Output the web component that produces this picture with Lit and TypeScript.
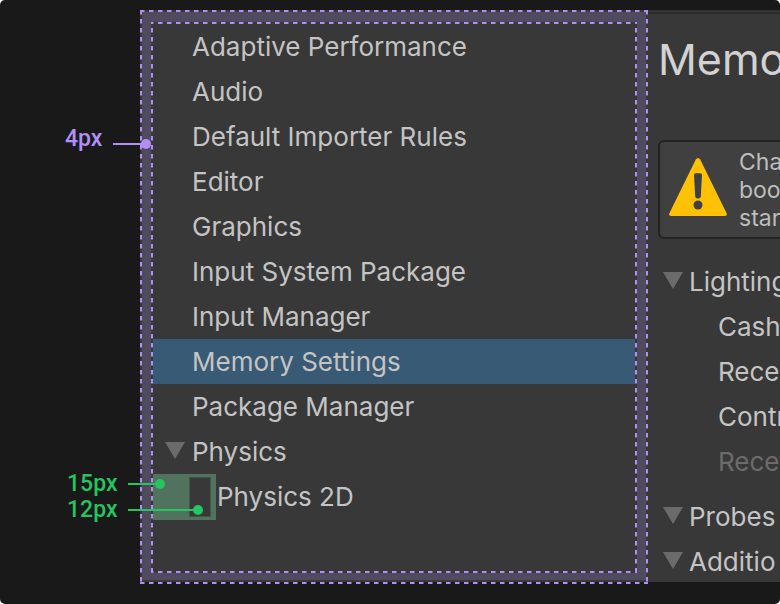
import { LitElement, html, css, nothing } from "lit";
import { customElement, property, state } from "lit/decorators.js";
import { classMap } from "lit/directives/class-map.js";

const arrow = html`<svg class="arrow" viewBox="0 0 20 17" aria-hidden="true">
  <path d="M0 0H20L10 17Z" fill="#6b6b6b" />
</svg>`;

const rowStyles = css`
  button {
    display: flex;
    align-items: center;
    width: 100%;
    height: 45px;
    margin: 0;
    padding: 0;
    border: 0;
    background: none;
    color: #c4c4c4;
    font: inherit;
    text-align: left;
    white-space: nowrap;
  }
  ul {
    list-style: none;
    margin: 0;
    padding: 0;
  }
  .arrow {
    flex: none;
    width: 20px;
    height: 17px;
    margin: 0 6px 2px 0;
  }
`;

interface Category {
  name: string;
  kind?: "group" | "child";
}

const CATEGORIES: Category[] = [
  { name: "Adaptive Performance" },
  { name: "Audio" },
  { name: "Default Importer Rules" },
  { name: "Editor" },
  { name: "Graphics" },
  { name: "Input System Package" },
  { name: "Input Manager" },
  { name: "Memory Settings" },
  { name: "Package Manager" },
  { name: "Physics", kind: "group" },
  { name: "Physics 2D", kind: "child" },
];

@customElement("category-list")
export class CategoryList extends LitElement {
  @state() selected = "Memory Settings";

  static styles = [
    rowStyles,
    css`
      :host {
        --dash: #b18ff5;
        --soft: #b18ff580;
        --across: repeating-linear-gradient(90deg, var(--dash) 0 4px, var(--soft) 4px 5px, transparent 5px 9px);
        --down: repeating-linear-gradient(180deg, var(--dash) 0 4px, var(--soft) 4px 5px, transparent 5px 9px);
        display: block;
        position: relative;
        min-width: 0;
        background: linear-gradient(#383838, #383838) 0 0 / 100% calc(100% - 2px) no-repeat;
      }
      .outer,
      .inner {
        background-image: var(--across), var(--across), var(--down), var(--down);
        background-size: 100% 2px, 100% 2px, 2px 100%, 2px 100%;
        background-repeat: no-repeat;
      }
      .outer {
        padding: 2px 2px 4px;
        background-position: 0 0, 0 100%, 0 0, 100% 0;
      }
      .band {
        border: solid #504a5e;
        border-width: 10px 9px 7px;
      }
      .inner {
        padding: 2px 2px 54px;
        background-position: -2px 0, -2px 100%, 0 -3px, 100% -3px;
        background-size: calc(100% + 2px) 2px, calc(100% + 2px) 2px, 2px calc(100% + 3px), 2px calc(100% + 3px);
      }
      button {
        padding-left: 39px;
      }
      .group {
        padding-left: 12px;
      }
      .group .arrow {
        margin-right: 7px;
      }
      .child {
        padding-left: 0;
        gap: 1px;
      }
      .selected {
        background: #385a75;
      }
      .indent {
        box-sizing: border-box;
        flex: none;
        width: 63px;
        height: 46px;
        border: solid #51735e;
        border-width: 3px 5px 3px 36px;
      }
      .slot {
        display: block;
        box-sizing: border-box;
        height: 100%;
        border: 1px solid #40564a;
      }
    `,
  ];

  render() {
    return html`<nav class="outer" aria-label="Project settings">
      <div class="band">
        <ul class="inner">
          ${CATEGORIES.map(
            (c) => html`<li>
              <button
                class=${classMap({
                  selected: c.name === this.selected,
                  group: c.kind === "group",
                  child: c.kind === "child",
                })}
                @click=${() => (this.selected = c.name)}
              >
                ${c.kind === "group" ? arrow : nothing}
                ${c.kind === "child" ? html`<span class="indent"><span class="slot"></span></span>` : nothing}
                <span>${c.name}</span>
              </button>
            </li>`,
          )}
        </ul>
      </div>
    </nav>`;
  }
}

@customElement("settings-pane")
export class SettingsPane extends LitElement {
  static styles = [
    rowStyles,
    css`
      :host {
        display: flex;
        flex-direction: column;
        overflow: hidden;
        box-sizing: border-box;
        height: calc(100% - 2px);
        min-height: 0;
        contain: size;
        padding-left: 10px;
        border-top: 1px solid #303030;
        background: linear-gradient(#2a2a2a, #2a2a2a) 0 1px / 100% 2px no-repeat #383838;
      }
      h1 {
        flex: none;
        margin: 22px 0 0;
        color: #d2d2d2;
        font-size: 43px;
        font-weight: 400;
        line-height: 52px;
        white-space: nowrap;
      }
      .notice {
        box-sizing: border-box;
        flex: none;
        display: flex;
        align-items: center;
        gap: 12px;
        width: 200px;
        height: 99px;
        margin-top: 55px;
        padding-left: 9px;
        border: 2px solid #232323;
        border-radius: 6px;
        background: #404040;
        color: #bdbdbd;
        font-size: 23px;
        line-height: 28px;
      }
      .notice svg {
        flex: none;
        width: 58px;
        height: 58px;
        margin-bottom: 6px;
      }
      p {
        margin: 0;
      }
      section {
        flex: none;
        padding-left: 5px;
      }
      .notice + section {
        padding-top: 20px;
        padding-bottom: 10px;
      }
      li {
        height: 45px;
        padding-left: 55px;
        line-height: 45px;
        white-space: nowrap;
      }
      .disabled {
        color: #6b6b6b;
      }
    `,
  ];

  render() {
    return html`
      <h1>Memo</h1>
      <div class="notice" role="note">
        <svg viewBox="0 0 58 58" aria-hidden="true">
          <path
            d="M26.8 1.6Q29-1.5 31.2 1.6L57.6 55.2Q58.4 57.6 56 58H2Q-.4 57.6.4 55.2Z"
            fill="#ffc107"
          />
          <path d="M25 17Q25 15.2 27 15.2H31Q33 15.2 33 17L31.8 38.6Q31.6 40.4 30 40.4H28Q26.4 40.4 26.2 38.6Z" fill="#404040" />
          <circle cx="29" cy="47" r="4.5" fill="#404040" />
        </svg>
        <p>Cha<br />boo<br />star</p>
      </div>
      <section>
        <button>${arrow}<span>Lighting</span></button>
        <ul>
          <li>Cash</li>
          <li>Rece</li>
          <li>Contr</li>
          <li class="disabled">Rece</li>
        </ul>
      </section>
      <section><button>${arrow}<span>Probes</span></button></section>
      <section><button>${arrow}<span>Additio</span></button></section>
    `;
  }
}

@customElement("size-callout")
export class SizeCallout extends LitElement {
  @property() label = "";

  static styles = css`
    :host {
      position: absolute;
      display: flex;
      align-items: center;
      gap: 11px;
      height: 26px;
      font: 500 23px/26px Roboto, sans-serif;
    }
    .line {
      position: relative;
      flex: 1;
      height: 2px;
      margin-top: var(--drop, 0);
      background: currentColor;
    }
    .line::after {
      content: "";
      position: absolute;
      right: -5px;
      top: -4px;
      width: 10px;
      height: 10px;
      border-radius: 50%;
      background: currentColor;
    }
  `;

  render() {
    return html`<span>${this.label}</span><span class="line"></span>`;
  }
}

@customElement("app-root")
export class AppRoot extends LitElement {
  static styles = css`
    :host {
      display: block;
      background: #fff;
      color: #c4c4c4;
      font: 26px/32px Inter, sans-serif;
    }
    main {
      position: relative;
      display: grid;
      grid-template-columns: minmax(0, 1fr) 132px;
      overflow: hidden;
      padding: 10px 0 20px 140px;
      border-radius: 5px;
      background: #191919;
    }
    .padding {
      --drop: 10px;
      left: 65px;
      top: 126px;
      width: 81px;
      color: #b18ff5;
    }
    .indent,
    .foldout {
      left: 67px;
      color: #25c561;
    }
    .indent {
      top: 471px;
      width: 93px;
    }
    .foldout {
      top: 497px;
      width: 131px;
    }
  `;

  render() {
    return html`<main>
      <category-list></category-list>
      <settings-pane></settings-pane>
      <size-callout class="padding" label="4px"></size-callout>
      <size-callout class="indent" label="15px"></size-callout>
      <size-callout class="foldout" label="12px"></size-callout>
    </main>`;
  }
}
